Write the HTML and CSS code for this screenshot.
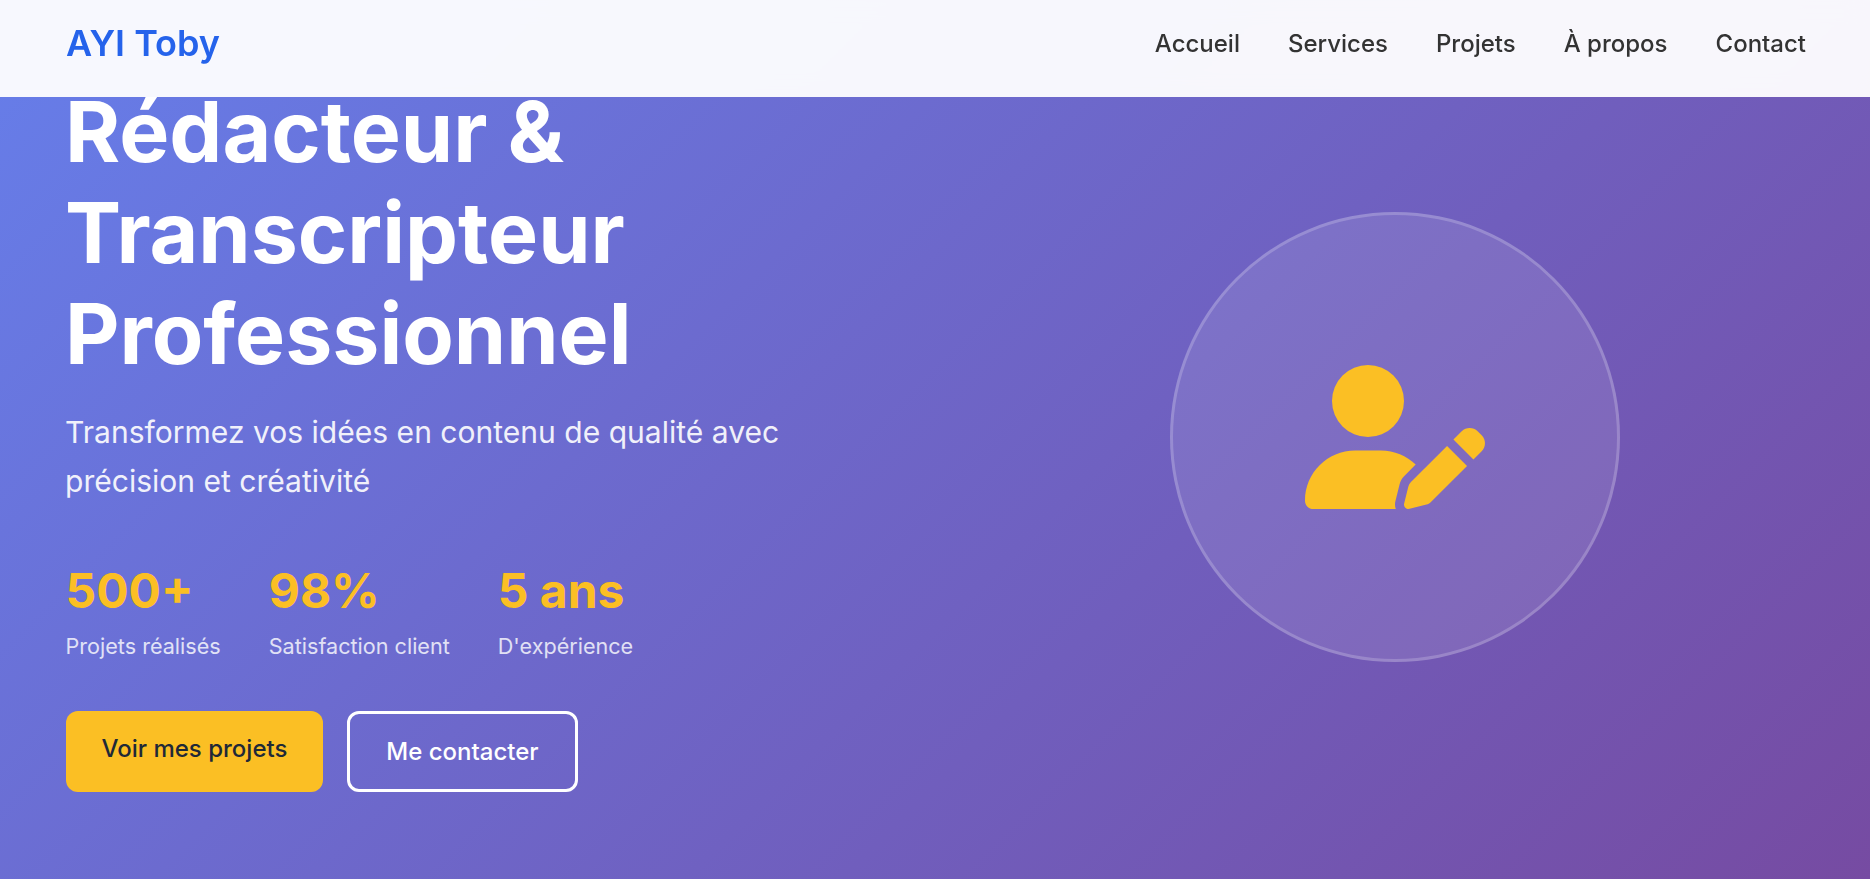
FILE: index.html
```html
<!DOCTYPE html>
<html lang="fr">
<head>
  <meta charset="UTF-8" />
  <meta name="viewport" content="width=device-width, initial-scale=1.0" />
  <title>AYI Toby | Rédacteur & Transcripteur</title>
  <link rel="stylesheet" href="styles.css">
</head>
<body>

  <header class="navbar">
    <div class="logo">AYI Toby</div>
    <nav class="nav-links">
      <a href="#">Accueil</a>
      <a href="#">Services</a>
      <a href="#">Projets</a>
      <a href="#">À propos</a>
      <a href="#">Contact</a>
    </nav>
  </header>

  <section class="hero">
    <div class="hero-text">
      <h1>Rédacteur &amp; Transcripteur Professionnel</h1>
      <p class="hero-lead">Transformez vos idées en contenu de qualité avec précision et créativité</p>

      <div class="stats">
        <div class="stat">
          <div class="stat-value">500+</div>
          <div class="stat-label">Projets réalisés</div>
        </div>
        <div class="stat">
          <div class="stat-value">98%</div>
          <div class="stat-label">Satisfaction client</div>
        </div>
        <div class="stat">
          <div class="stat-value">5 ans</div>
          <div class="stat-label">D'expérience</div>
        </div>
      </div>

      <div class="hero-buttons">
        <a href="#" class="btn btn-primary">Voir mes projets</a>
        <a href="#" class="btn btn-outline">Me contacter</a>
      </div>
    </div>

    <div class="hero-visual">
      <div class="hero-circle">
        <!-- user with pen icon -->
        <svg class="hero-icon" viewBox="0 0 640 512" aria-hidden="true">
          <path d="M224 256A128 128 0 1 0 224 0a128 128 0 1 0 0 256zm-45.7 48C79.8 304 0 383.8 0 482.3C0 498.7 13.3 512 29.7 512H322.8c-3.1-8.8-3.7-18.4-1.4-27.8l15-60.1c2.8-11.3 8.6-21.5 16.8-29.7l40.3-40.3c-32.1-31-75.7-50.1-123.9-50.1H178.3zm435.5-68.3c-15.6-15.6-40.9-15.6-56.6 0l-29.4 29.4 71 71 29.4-29.4c15.6-15.6 15.6-40.9 0-56.6l-14.4-14.4zM375.9 417c-4.1 4.1-7 9.2-8.4 14.9l-15 60.1c-1.4 5.5 .2 11.2 4.2 15.2s9.7 5.6 15.2 4.2l60.1-15c5.6-1.4 10.8-4.3 14.9-8.4L576.1 358.7l-71-71L375.9 417z"/>
        </svg>
      </div>
    </div>
  </section>

</body>
</html>
```

FILE: styles.css
```css
/* General Body and Layout */
* {
  box-sizing: border-box;
}

body {
  font-family: Inter, "Liberation Sans", sans-serif;
  margin: 0;
  padding: 0;
  line-height: 1.6;
  color: #1f2937;
  overflow: hidden;
}

/* Navbar */
.navbar {
  position: fixed;
  top: 0;
  left: 0;
  width: 100%;
  height: 97px;
  z-index: 10;
  padding: 0 64px 9px 66px;
  display: flex;
  justify-content: space-between;
  align-items: center;
  background-color: rgba(255, 255, 255, 0.95);
  backdrop-filter: blur(10px);
}

.logo {
  font-size: 36px;
  font-weight: 600;
  color: #2563eb;
}

.nav-links {
  display: flex;
  gap: 48px;
}

.nav-links a {
  font-size: 24px;
  font-weight: 500;
  color: #333;
  text-decoration: none;
}

/* Hero Section */
.hero {
  height: 100vh;
  padding: 0 64px 5px 66px;
  display: grid;
  grid-template-columns: 1fr 1fr;
  gap: 96px;
  align-items: center;
  color: white;
  background: linear-gradient(135deg, #667eea 0%, #764ba2 100%);
}

.hero-text {
  margin-bottom: 1px;
}

.hero h1 {
  font-size: 84.15px;
  font-weight: 700;
  line-height: 1.2;
  margin: 0 0 24px -1px;
}

.hero-lead {
  font-size: 30.05px;
  line-height: 49px;
  margin: 0 0 48px -1px;
  opacity: 0.9;
}

/* Stats */
.stats {
  display: flex;
  gap: 48px;
  margin: 0 0 48px -0.5px;
}

.stat-value {
  font-size: 48px;
  font-weight: 700;
  line-height: 73px;
  margin-bottom: 2px;
  color: #fbbf24;
}

.stat-label {
  font-size: 21.6px;
  opacity: 0.8;
}

/* Buttons */
.hero-buttons {
  display: flex;
  gap: 24px;
}

.btn {
  font-size: 24px;
  font-weight: 500;
  line-height: 31px;
  padding: 22px 35.5px;
  border-radius: 12px;
  text-decoration: none;
}

.btn-primary {
  background-color: #fbbf24;
  color: #1f2937;
}

.btn-outline {
  padding: 22px 36.5px;
  border: 3px solid white;
  color: white;
}

/* Hero Visual */
.hero-visual {
  display: flex;
  justify-content: center;
}

.hero-circle {
  width: 450px;
  height: 450px;
  border-radius: 50%;
  border: 3px solid rgba(255, 255, 255, 0.2);
  background-color: rgba(255, 255, 255, 0.1);
  display: flex;
  justify-content: center;
  align-items: center;
}

.hero-icon {
  width: 180px;
  height: 144px;
  margin-left: -1px;
  fill: #fbbf24;
}
```
